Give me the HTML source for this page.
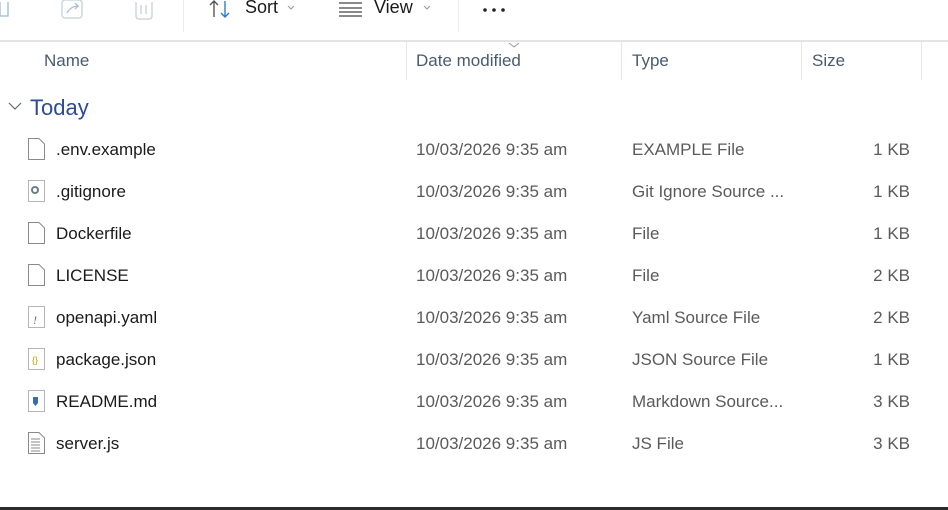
<!DOCTYPE html>
<html><head><meta charset="utf-8"><style>
body{margin:0;width:948px;height:510px;background:#fff;position:relative;overflow:hidden;font-family:"Liberation Sans",sans-serif;}
.a{position:absolute;white-space:nowrap;}
.t{font-size:17px;line-height:20px;}
.n{color:#1a1a1a;left:56px;}
.d{color:#5a5a5a;left:416px;}
.y{color:#5a5a5a;left:632px;}
.s{color:#5a5a5a;right:38px;}
.h{color:#4a5a70;font-size:17px;line-height:20px;top:51px;}
.vs{position:absolute;width:1px;background:#e6e6e6;}
.ic{position:absolute;left:28px;}
</style></head><body>
<!-- toolbar -->
<svg class="a" style="left:0;top:0" width="520" height="30">
<path d="M0 2 V16 H8 V2" fill="none" stroke="#9bb8d8" stroke-width="1.3"/>
<rect x="62" y="0" width="20" height="18" rx="3" fill="none" stroke="#c8d0da" stroke-width="1.3"/>
<path d="M67 13 q4-7 11-7 l-3-3 M78 6 l-3 3" fill="none" stroke="#a9bfd9" stroke-width="1.3"/>
<path d="M136 2 V16 q0 3 3 3 h10 q3 0 3-3 V2 M141 5 V14 M146 5 V14" fill="none" stroke="#c8cdd3" stroke-width="1.2"/>
<path d="M214 1 V17 M210 5 L214 1 L218 5" fill="none" stroke="#555" stroke-width="1.4"/>
<path d="M225 1 V17 M221 13 L225 17 L229 13" fill="none" stroke="#2a7bd5" stroke-width="1.4"/>
<path d="M288 6 l3 3 l3-3" fill="none" stroke="#999" stroke-width="1"/>
<path d="M339 3 H362 M339 8 H362 M339 12 H362 M339 16 H362" stroke="#444" stroke-width="1.3"/>
<path d="M424 6 l3 3 l3-3" fill="none" stroke="#999" stroke-width="1"/>
<circle cx="485" cy="10" r="1.8" fill="#222"/><circle cx="494" cy="10" r="1.8" fill="#222"/><circle cx="503" cy="10" r="1.8" fill="#222"/>
</svg>
<div class="a" style="left:245px;top:-3px;font-size:18px;color:#1a1a1a">Sort</div>
<div class="a" style="left:374px;top:-3px;font-size:18px;color:#1a1a1a">View</div>
<div class="vs" style="left:183px;top:0;height:32px;background:#ececec"></div>
<div class="vs" style="left:458px;top:0;height:32px;background:#ececec"></div>
<div class="a" style="left:0;top:40px;width:948px;height:2px;background:#e4e4e4"></div>
<!-- header -->
<div class="a h" style="left:44px">Name</div>
<div class="a h" style="left:416px">Date modified</div>
<div class="a h" style="left:632px">Type</div>
<div class="a h" style="left:812px">Size</div>
<svg class="a" style="left:508px;top:42px" width="14" height="6"><path d="M1 1 l5 4 l5-4" fill="none" stroke="#999"/></svg>
<div class="vs" style="left:406px;top:42px;height:38px"></div>
<div class="vs" style="left:621px;top:42px;height:38px"></div>
<div class="vs" style="left:801px;top:42px;height:38px"></div>
<div class="vs" style="left:921px;top:42px;height:38px"></div>
<!-- group -->
<svg class="a" style="left:8px;top:101px" width="14" height="10"><path d="M1 2 l6 6 l6-6" fill="none" stroke="#666" stroke-width="1.2"/></svg>
<div class="a" style="left:30px;top:95px;font-size:22px;color:#2d4a94">Today</div>
<!-- rows -->
<div class="a t n" style="top:140px">.env.example</div><div class="a t d" style="top:140px">10/03/2026 9:35 am</div><div class="a t y" style="top:140px">EXAMPLE File</div><div class="a t s" style="top:140px">1 KB</div>
<div class="a t n" style="top:182px">.gitignore</div><div class="a t d" style="top:182px">10/03/2026 9:35 am</div><div class="a t y" style="top:182px">Git Ignore Source ...</div><div class="a t s" style="top:182px">1 KB</div>
<div class="a t n" style="top:224px">Dockerfile</div><div class="a t d" style="top:224px">10/03/2026 9:35 am</div><div class="a t y" style="top:224px">File</div><div class="a t s" style="top:224px">1 KB</div>
<div class="a t n" style="top:266px">LICENSE</div><div class="a t d" style="top:266px">10/03/2026 9:35 am</div><div class="a t y" style="top:266px">File</div><div class="a t s" style="top:266px">2 KB</div>
<div class="a t n" style="top:308px">openapi.yaml</div><div class="a t d" style="top:308px">10/03/2026 9:35 am</div><div class="a t y" style="top:308px">Yaml Source File</div><div class="a t s" style="top:308px">2 KB</div>
<div class="a t n" style="top:350px">package.json</div><div class="a t d" style="top:350px">10/03/2026 9:35 am</div><div class="a t y" style="top:350px">JSON Source File</div><div class="a t s" style="top:350px">1 KB</div>
<div class="a t n" style="top:392px">README.md</div><div class="a t d" style="top:392px">10/03/2026 9:35 am</div><div class="a t y" style="top:392px">Markdown Source...</div><div class="a t s" style="top:392px">3 KB</div>
<div class="a t n" style="top:434px">server.js</div><div class="a t d" style="top:434px">10/03/2026 9:35 am</div><div class="a t y" style="top:434px">JS File</div><div class="a t s" style="top:434px">3 KB</div>
<!-- icons -->
<svg class="a" style="left:27px;top:138px" width="20" height="330">
<g fill="#fff" stroke="#8a8a8a" stroke-width="1">
<path d="M1.5 0.5 H12 L17.5 6 V21.5 H1.5 Z"/>
<path d="M1.5 42.5 H17.5 V63.5 H1.5 Z" stroke="#b5b5b5"/>
<path d="M1.5 84.5 H12 L17.5 90 V105.5 H1.5 Z"/>
<path d="M1.5 126.5 H12 L17.5 132 V147.5 H1.5 Z"/>
<path d="M1.5 168.5 H17.5 V189.5 H1.5 Z" stroke="#b5b5b5"/>
<path d="M1.5 210.5 H17.5 V231.5 H1.5 Z" stroke="#b5b5b5"/>
<path d="M1.5 252.5 H17.5 V273.5 H1.5 Z" stroke="#b5b5b5"/>
<path d="M1.5 294.5 H12 L17.5 300 V315.5 H1.5 Z"/>
</g>
<circle cx="8" cy="52" r="3" fill="none" stroke="#6d7b8a" stroke-width="2"/>
<text x="6" y="186" font-size="12" font-style="italic" fill="#6e5aa8" font-family="Liberation Serif">!</text>
<text x="5" y="225" font-size="9" fill="#c9a400" font-family="Liberation Sans">{}</text>
<path d="M6 259 h5 v6 l-2.5 3 l-2.5-3 z" fill="#3a6da8"/>
<path d="M4 301 H13 M4 304 H13 M4 307 H13 M4 310 H13 M4 313 H13" stroke="#8a8a8a"/>
</svg>
<div class="a" style="left:0;top:507px;width:948px;height:3px;background:#2b2b2b"></div>
</body></html>
